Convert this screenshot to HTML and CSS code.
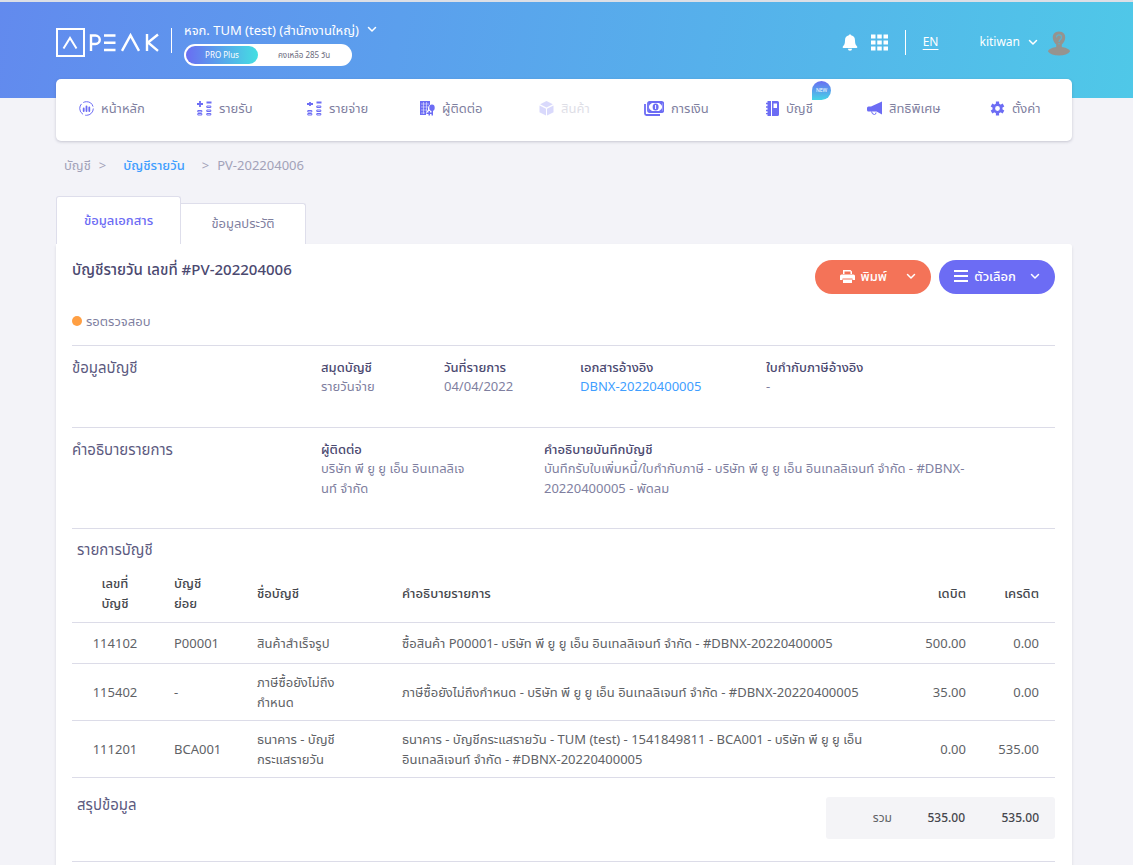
FILE: index.html
```html
<!DOCTYPE html>
<html lang="th">
<head>
<meta charset="utf-8">
<meta name="viewport" content="width=device-width, initial-scale=1">
<title>PEAK - บัญชีรายวัน PV-202204006</title>
<link rel="stylesheet" href="styles.css">
</head>
<body>
<svg class="defs" aria-hidden="true">
  <symbol id="chevron" viewBox="0 0 10 7"><path d="M1.500 1.500L5 5l3.500-3.500" fill="none" stroke="currentColor" stroke-width="1.500" stroke-linecap="round" stroke-linejoin="round"/></symbol>
</svg>
<div class="page">
  <header class="header">
    <a class="logo" href="#" aria-label="PEAK">
      <svg viewBox="0 0 104 30" width="104" height="30" fill="none" stroke="#fff">
        <rect x="1" y="1" width="27" height="27" stroke-width="2"/>
        <path d="M7.500 20.500L14 10l6.500 10.500" stroke-width="2"/>
        <g stroke-width="2.400">
          <path d="M35 23V7.500h4.500a4.200 4.200 0 0 1 0 8.500H35"/>
          <path d="M48 7.500h11.500M48 14.800h11.500M48 22h11.500"/>
          <path d="M66 22.800l8.500-15.500L83 22.800"/>
          <path d="M91 6v17M102 6.500L92 14.500l10 8.300"/>
        </g>
      </svg>
    </a>
    <span class="divider"></span>
    <div class="company">
      <button class="plain company-name" type="button">หจก. TUM (test) (สำนักงานใหญ่) <svg class="chev" aria-hidden="true"><use href="#chevron"/></svg></button>
      <div class="plan"><span class="plan-name">PRO Plus</span><span class="plan-left">คงเหลือ 285 วัน</span></div>
    </div>
    <div class="tools">
      <button class="plain" type="button" aria-label="แจ้งเตือน"><svg width="16" height="17" viewBox="0 0 16 18" fill="#fff"><path d="M8 0l1.200 1.400C12 2 13.300 4 13.300 7c0 3.500.7 4.800 2.200 6.200.6.800.2 1.500-.6 1.500H1.100c-.8 0-1.200-.7-.6-1.500C2 11.800 2.700 10.500 2.700 7c0-3 1.300-5 4.100-5.600zM5.800 15.700h4.400a2.200 2 0 0 1-4.400 0z"/></svg></button>
      <button class="plain apps" type="button" aria-label="แอป"><svg width="17" height="17" viewBox="0 0 17 17"><path d="M0 2.500h17M0 8.500h17M0 14.500h17" stroke="#fff" stroke-width="4" stroke-dasharray="4.500 1.750"/></svg></button>
      <span class="divider"></span>
      <a class="lang" href="#">EN</a>
      <button class="plain user" type="button">kitiwan <svg class="chev" aria-hidden="true"><use href="#chevron"/></svg>
        <svg class="avatar" viewBox="0 0 22 25" aria-hidden="true"><path d="M11 .5C6.500.5 4.500 3.500 4.800 7c.3 3 1.700 5 3.400 6.500V16Q0 17.500 0 20.500q3 4 11 4t11-4q0-3-8.200-4.500v-2.500c1.700-1.500 3.100-3.500 3.400-6.500C17.500 3.500 15.500.5 11 .5z" fill="#96938f"/><path d="M8.500 6.500c0-3.500 5-3.500 5 0 0 2-2.500 2-2.500 4.500M11 12v1.500" fill="none" stroke="#5fb3cb" stroke-width="1.200"/></svg>
      </button>
    </div>
  </header>

  <nav class="nav">
    <a href="#"><svg class="i15" viewBox="0 0 15 15" fill="none" stroke="currentColor"><circle cx="7.500" cy="7.500" r="6.800" stroke-dasharray="12 2.240" stroke-width="1"/><path d="M4.700 7.500V10M7.500 5.500V10M10.300 6.500V10" stroke-width="1.800" stroke-linecap="round"/></svg>หน้าหลัก</a>
    <a href="#"><svg class="i15" viewBox="0 0 15 15" fill="none" stroke="currentColor"><path d="M0 3h6M3 0v6M9.500 1.500h5" stroke-width="1.800"/><path d="M.8 9.500h4v1.500h-4zM.8 12.500h4v1.500h-4zM9.800 5h4v1.500h-4zM9.800 9h4v1.500h-4zM9.800 12.500h4V14h-4z" stroke-width="1"/></svg>รายรับ</a>
    <a href="#"><svg class="i15" viewBox="0 0 15 15" fill="none" stroke="currentColor"><path d="M0 3h6M3 1v4M9.500 1.500h5" stroke-width="1.800"/><path d="M.8 9.500h4v1.500h-4zM.8 12.500h4v1.500h-4zM9.800 5h4v1.500h-4zM9.800 9h4v1.500h-4zM9.800 12.500h4V14h-4z" stroke-width="1"/></svg>รายจ่าย</a>
    <a href="#"><svg class="i15" viewBox="0 0 15 15"><path d="M0 0h10v3.500Q8 5 8 7v2L6 11v3H0z" fill="currentColor"/><ellipse cx="12" cy="6.800" rx="2.700" ry="3.200" fill="currentColor"/><path d="M11.500 9h1.500v5.500h-1.500zM6.500 11.500h2V10H10v1.500h1.500V13H10v1.500H8.500V13h-2z" fill="currentColor"/><path d="M1 3h8M1 6h7M1 9h6M1 12h4M3.500 1v12M6.500 1v9" stroke="#fff" stroke-width=".5"/></svg>ผู้ติดต่อ</a>
    <a class="disabled" href="#" aria-disabled="true"><svg class="i15" viewBox="0 0 15 15" fill="currentColor"><path d="M7.500 0l6.300 3.200-6.300 3.200-6.300-3.200zM.5 4.500L7 7.700v6.800L.5 11.300zM14.500 4.500L8 7.700v6.800l6.500-3.200z"/></svg>สินค้า</a>
    <a href="#"><svg class="i20" viewBox="0 0 20 15"><path d="M1 3v9.500q0 1.500 1.500 1.500H16" fill="none" stroke="currentColor" stroke-width="1.800"/><rect x="4" y="1" width="15.200" height="10" rx="1.500" fill="none" stroke="currentColor" stroke-width="1.800"/><path d="M5 2h3q-3 2-3 3zM18 2h-3q3 2 3 3zM5 10h3q-3-2-3-3zM18 10h-3q3-2 3-3z" fill="currentColor"/><ellipse cx="11.600" cy="6" rx="3" ry="3.500" fill="currentColor"/><path d="M11.600 4v4" stroke="#fff"/></svg>การเงิน</a>
    <a href="#"><svg class="i13" viewBox="0 0 13 15"><path d="M1.500 0H5v15H1.500zM6 0h5.500Q13 0 13 1.500v12q0 1.500-1.500 1.500H6z" fill="currentColor"/><path d="M0 2.500h2M0 6h2M0 9.500h2M0 12.700h2" stroke="currentColor" stroke-width="1.300"/><path d="M7.500 2.500H11V7H7.500z" fill="#fff"/></svg><span class="with-tag">บัญชี<span class="tag">NEW</span></span></a>
    <a href="#"><svg class="i15" viewBox="0 0 15 15" fill="currentColor"><path d="M15 .5v13L9.500 10.500h-8Q0 10.500 0 9V7q0-1.500 1.500-1.500H4z"/><path d="M4.500 10.500q.5 3 3 3 1.500 0 1.500-2" fill="none" stroke="currentColor" stroke-width="1"/></svg>สิทธิพิเศษ</a>
    <a href="#"><svg class="i15" viewBox="0 0 15 15"><path d="M7.500 .5v14M1.500 4l12 7M1.500 11l12-7" stroke="currentColor" stroke-width="3.200"/><circle cx="7.500" cy="7.500" r="3.700" fill="#fff" stroke="currentColor" stroke-width="2.600"/></svg>ตั้งค่า</a>
  </nav>

  <nav class="crumbs"><a href="#">บัญชี</a><span>&gt;</span><a class="link" href="#">บัญชีรายวัน</a><span class="sep">&gt;</span><span>PV-202204006</span></nav>

  <div class="tabs" role="tablist">
    <button class="tab active" role="tab" aria-selected="true" type="button">ข้อมูลเอกสาร</button>
    <button class="tab" role="tab" aria-selected="false" type="button">ข้อมูลประวัติ</button>
  </div>

  <main class="panel">
    <div class="title-row">
      <h1>บัญชีรายวัน เลขที่ #PV-202204006</h1>
      <div class="actions">
        <button class="pill print" type="button"><svg width="15" height="15" viewBox="0 0 15 15"><path d="M3 5V1h7.500L12 2.500V5M0 7q0-1.500 1.500-1.500h12Q15 5.500 15 7v4h-2.500V9.500h-10V11H0z" fill="#fff"/><path d="M3 10.500h9V14H3z" fill="#fff"/><path d="M4.500 2.500h6V5h-6z" fill="#f47358"/></svg>พิมพ์<svg class="chev" aria-hidden="true"><use href="#chevron"/></svg></button>
        <button class="pill options" type="button"><svg width="14" height="12" viewBox="0 0 14 12"><path d="M0 1h14M0 6h14M0 11h14" stroke="#fff" stroke-width="2"/></svg>ตัวเลือก<svg class="chev" aria-hidden="true"><use href="#chevron"/></svg></button>
      </div>
    </div>
    <p class="status"><span class="dot"></span>รอตรวจสอบ</p>

    <section class="info">
      <h2>ข้อมูลบัญชี</h2>
      <dl class="book">
        <div><dt>สมุดบัญชี</dt><dd>รายวันจ่าย</dd></div>
        <div><dt>วันที่รายการ</dt><dd>04/04/2022</dd></div>
        <div><dt>เอกสารอ้างอิง</dt><dd><a class="link" href="#">DBNX-20220400005</a></dd></div>
        <div><dt>ใบกำกับภาษีอ้างอิง</dt><dd>-</dd></div>
      </dl>
    </section>

    <section class="info tall">
      <h2>คำอธิบายรายการ</h2>
      <dl class="desc">
        <div><dt>ผู้ติดต่อ</dt><dd>บริษัท พี ยู ยู เอ็น อินเทลลิเจ<br>นท์ จำกัด</dd></div>
        <div><dt>คำอธิบายบันทึกบัญชี</dt><dd>บันทึกรับใบเพิ่มหนี้/ใบกำกับภาษี - บริษัท พี ยู ยู เอ็น อินเทลลิเจนท์ จำกัด - #DBNX-<br>20220400005 - พัดลม</dd></div>
      </dl>
    </section>

    <section class="entries">
      <h2>รายการบัญชี</h2>
      <table>
        <colgroup><col class="c-no"><col class="c-sub"><col class="c-name"><col><col class="c-debit"><col class="c-credit"></colgroup>
        <thead><tr><th class="mid">เลขที่<br>บัญชี</th><th>บัญชี<br>ย่อย</th><th>ชื่อบัญชี</th><th>คำอธิบายรายการ</th><th class="num">เดบิต</th><th class="num">เครดิต</th></tr></thead>
        <tbody>
          <tr><td class="mid">114102</td><td>P00001</td><td>สินค้าสำเร็จรูป</td><td>ซื้อสินค้า P00001- บริษัท พี ยู ยู เอ็น อินเทลลิเจนท์ จำกัด - #DBNX-20220400005</td><td class="num">500.00</td><td class="num">0.00</td></tr>
          <tr><td class="mid">115402</td><td>-</td><td>ภาษีซื้อยังไม่ถึง<br>กำหนด</td><td>ภาษีซื้อยังไม่ถึงกำหนด - บริษัท พี ยู ยู เอ็น อินเทลลิเจนท์ จำกัด - #DBNX-20220400005</td><td class="num">35.00</td><td class="num">0.00</td></tr>
          <tr><td class="mid">111201</td><td>BCA001</td><td>ธนาคาร - บัญชี<br>กระแสรายวัน</td><td>ธนาคาร - บัญชีกระแสรายวัน - TUM (test) - 1541849811 - BCA001 - บริษัท พี ยู ยู เอ็น<br>อินเทลลิเจนท์ จำกัด - #DBNX-20220400005</td><td class="num">0.00</td><td class="num">535.00</td></tr>
        </tbody>
      </table>
    </section>

    <section class="summary">
      <h2>สรุปข้อมูล</h2>
      <div class="total"><span>รวม</span><b>535.00</b><b>535.00</b></div>
    </section>
  </main>
</div>
</body>
</html>
```

FILE: styles.css
```css
* { box-sizing: border-box; }

body {
  margin: 0;
  background: linear-gradient(100deg, #628aee, #5b9fed 35%, #4fc8e8) no-repeat 0 0 / 100% 98px, #f3f3f8;
  border-top: 2px solid #dcdfe6;
  color: #7f7f9f;
  font-family: "Noto Sans", "Noto Sans Thai", "Open Sans", sans-serif;
  font-size: 13px;
  line-height: 20px;
}

h1, h2, p, dl, dd { margin: 0; }
h2 { color: #5c5a80; font-size: 15px; font-weight: 400; line-height: 20px; }
a { color: inherit; text-decoration: none; }
button { font: inherit; cursor: pointer; }
.link { color: #409eff; }
.defs { display: none; }
.page { padding: 0 61px 0 56px; }
.chev { width: 10px; height: 7px; flex: none; }

.header { display: flex; align-items: center; height: 77px; color: #fff; }
.logo { display: flex; width: 104px; margin-right: 11px; }
.divider { width: 1px; height: 25px; background: #fff; }
.logo { margin-top: 4px; }
.plain { display: flex; align-items: center; gap: 8px; border: 0; padding: 0; background: none; color: inherit; }
.company { margin-left: 12px; }
.company-name { font-size: 13px; line-height: 28px; }
.plan { display: flex; align-items: center; width: 168px; height: 22px; padding: 2px; border-radius: 11px; background: #fff; font-size: 8px; line-height: 18px; text-align: center; }
.plan-name { width: 72px; border-radius: 9px; background: linear-gradient(90deg, #6a6df2, #44dfe2); }
.plan-left { flex: 1; color: #6b6b7d; }
.tools { display: flex; align-items: center; margin-left: auto; padding-top: 3px; font-size: 12px; }
.apps { margin: 0 17px 0 13px; }
.lang { margin: 0 41px 0 17px; text-decoration: underline; text-underline-offset: 3px; }
.avatar { width: 22px; height: 25px; margin: 2px 2px 0 2px; }

.nav {
  display: grid;
  grid-template-columns: 118fr 110fr 113fr 119fr 105fr 122fr 101fr 123fr 82fr;
  height: 62px;
  padding: 18px 0 0 23px;
  border-radius: 5px;
  background: #fff;
  box-shadow: 0 1px 3px rgba(60, 60, 90, .25);
}
.nav a { display: flex; align-items: center; gap: 7px; height: 22px; white-space: nowrap; }
.nav svg { flex: none; height: 15px; color: #6c6cf4; }
.i13 { width: 13px; }
.i15 { width: 15px; }
.i20 { width: 20px; }
.nav .disabled { opacity: .25; }
.with-tag { position: relative; }
.tag {
  position: absolute;
  left: 26px;
  top: -17px;
  width: 19px;
  height: 19px;
  border-radius: 10px 10px 10px 0;
  background: linear-gradient(#6a6df2, #45d5e6);
  color: #fff;
  font-size: 5px;
  line-height: 19px;
  text-align: center;
}

.crumbs { display: flex; height: 55px; padding: 14px 8px 0; color: #a2a2b8; }
.crumbs span { margin-left: 8px; }
.crumbs .link { margin-left: 17px; font-weight: 500; }
.crumbs .sep { margin-left: 17px; }

.tabs { display: flex; align-items: flex-end; height: 48px; }
.tab { width: 125px; height: 41px; border: 1px solid #dedeeb; border-bottom: 0; border-left: 0; border-radius: 0 3px 0 0; padding: 0 0 2px; background: #fff; color: #7f7f9f; }
.tab.active { height: 48px; border-left: 1px solid #dedeeb; border-radius: 3px 3px 0 0; color: #6c6cf4; font-weight: 500; }

.panel { padding: 16px 17px 16px 16px; background: #fff; border-radius: 0 3px 0 0; box-shadow: 0 2px 3px rgba(60, 60, 90, .15); }
.title-row { display: flex; justify-content: space-between; height: 51px; }
h1 { color: #4b4970; font-size: 15px; font-weight: 500; line-height: 18px; }
.actions { display: flex; gap: 8px; }
.pill { display: flex; align-items: center; justify-content: flex-end; width: 116px; height: 34px; padding: 0 15px 2px; border: 0; border-radius: 17px; color: #fff; gap: 6px; font-weight: 500; }
.pill .chev { margin-left: 8px; }
.print .chev { margin-left: 13px; }
.print { background: #f47358; }
.options { background: #6c6cf4; }
.status { display: flex; align-items: center; gap: 4px; padding-bottom: 14px; }
.dot { width: 10px; height: 10px; border-radius: 5px; background: #ff9f43; }

.info { display: grid; grid-template-columns: 249fr 734fr; min-height: 82px; padding-top: 11px; border-top: 1px solid #dcdce8; }
.tall { min-height: 101px; }
.info dl { display: grid; padding-top: 1px; }
.book { grid-template-columns: 123fr 136fr 186fr 289fr; }
.desc { grid-template-columns: 223fr 511fr; }
dt { color: #4b4970; font-weight: 500; line-height: 18px; }

.entries { padding-top: 10px; border-top: 1px solid #dcdce8; }
.entries h2, .summary h2 { padding-left: 5px; }
table { width: 100%; margin-top: 10px; border-collapse: collapse; table-layout: fixed; color: #606266; }
.c-no { width: 86px; }
.c-sub { width: 83px; }
.c-name { width: 145px; }
.c-debit { width: 98px; }
.c-credit { width: 73px; }
th, td { padding: 8px 0 8px 16px; border-bottom: 1px solid #dcdce8; text-align: left; }
th { padding: 4px 0 9px 16px; color: #45474d; font-weight: 500; }
td { height: 41px; }
.mid { padding-left: 0; text-align: center; }
.num { padding-right: 16px; padding-left: 0; text-align: right; }
.summary { display: flex; justify-content: space-between; height: 84px; padding-top: 16px; border-bottom: 1px solid #dcdce8; }
.total { display: grid; grid-template-columns: 66px 73px 74px; align-items: center; width: 229px; height: 42px; margin-top: 3px; padding-right: 16px; border-radius: 3px; background: #f4f4f7; color: #606266; font-size: 12px; text-align: right; }
.total b { font-weight: 500; color: #45474d; }
```
